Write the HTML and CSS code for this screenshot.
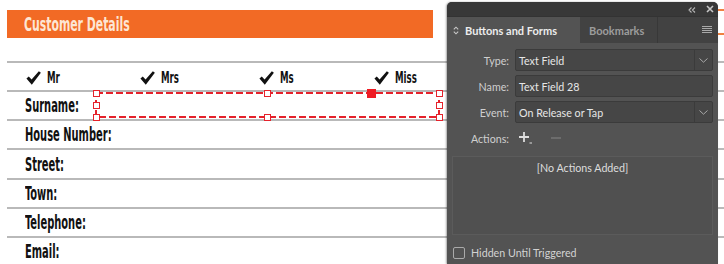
FILE: index.html
```html
<!DOCTYPE html>
<html lang="en">
<head>
<meta charset="utf-8">
<title>Customer Details form</title>
<link rel="stylesheet" href="styles.css">
</head>
<body>
<div class="sheet">
  <div class="banner"><span class="cond title">Customer Details</span></div>
  <div class="rows">
    <div class="row titles">
      <div class="choice"><svg class="check" viewBox="0 0 14 13" width="15" height="14"><path d="M0.4 7.0 L2.6 5.0 L5.2 8.0 L12.0 0.2 L13.9 1.5 L5.4 12.8 Z"/></svg><span class="cond small">Mr</span></div>
      <div class="choice"><svg class="check" viewBox="0 0 14 13" width="15" height="14"><path d="M0.4 7.0 L2.6 5.0 L5.2 8.0 L12.0 0.2 L13.9 1.5 L5.4 12.8 Z"/></svg><span class="cond small">Mrs</span></div>
      <div class="choice"><svg class="check" viewBox="0 0 14 13" width="15" height="14"><path d="M0.4 7.0 L2.6 5.0 L5.2 8.0 L12.0 0.2 L13.9 1.5 L5.4 12.8 Z"/></svg><span class="cond small">Ms</span></div>
      <div class="choice"><svg class="check" viewBox="0 0 14 13" width="15" height="14"><path d="M0.4 7.0 L2.6 5.0 L5.2 8.0 L12.0 0.2 L13.9 1.5 L5.4 12.8 Z"/></svg><span class="cond small">Miss</span></div>
    </div>
    <div class="row"><span class="cond label">Surname:</span></div>
    <div class="row"><span class="cond label">House Number:</span></div>
    <div class="row row-tall"><span class="cond label">Street:</span></div>
    <div class="row"><span class="cond label">Town:</span></div>
    <div class="row"><span class="cond label">Telephone:</span></div>
    <div class="row"><span class="cond label">Email:</span></div>
  </div>
</div>

<div class="selection">
  <svg class="sel-frame" width="345" height="26" viewBox="0 0 345 26"><rect x="1" y="1" width="343" height="24" fill="none" stroke="#e5222b" stroke-width="2" stroke-dasharray="7 3"/></svg>
  <span class="handle h-tl"></span>
  <span class="handle h-ml"></span>
  <span class="handle h-bl"></span>
  <span class="handle h-tm"></span>
  <span class="handle h-bm"></span>
  <span class="handle h-tr"></span>
  <span class="handle h-mr"></span>
  <span class="handle h-br"></span>
  <span class="handle-solid"></span>
</div>

<div class="guide guide-a"></div>
<div class="guide guide-b"></div>

<div class="panel">
  <div class="panel-top">
    <svg class="collapse" width="8" height="6" viewBox="0 0 8 6"><path d="M3.5 0.5 L1 3 L3.5 5.5 M7 0.5 L4.5 3 L7 5.5" fill="none" stroke="#b5b5b5" stroke-width="1.1"/></svg>
    <svg class="close" width="8" height="8" viewBox="0 0 8 8"><path d="M1 1 L7 7 M7 1 L1 7" stroke="#c8c8c8" stroke-width="1.6"/></svg>
  </div>
  <div class="tabs">
    <div class="tab tab-active">
      <svg class="updown" width="6" height="9" viewBox="0 0 6 9"><path d="M0.8 3.4 L3 1.2 L5.2 3.4 M0.8 5.6 L3 7.8 L5.2 5.6" fill="none" stroke="#c9c9c9" stroke-width="1.1"/></svg>
      Buttons and Forms
    </div>
    <div class="tab">Bookmarks</div>
    <div class="tab-rest">
      <svg class="menu" width="10" height="8" viewBox="0 0 10 8"><path d="M0 0.5 H10 M0 2.5 H10 M0 4.5 H10 M0 6.5 H10" stroke="#a9a9a9" stroke-width="1"/></svg>
    </div>
  </div>
  <div class="panel-body">
    <div class="field-row">
      <span class="field-label">Type:</span>
      <div class="field select"><span class="field-text">Text Field</span><span class="chev"><svg width="9" height="5" viewBox="0 0 9 5"><path d="M0.5 0.5 L4.5 4.2 L8.5 0.5" fill="none" stroke="#a8a8a8" stroke-width="1"/></svg></span></div>
    </div>
    <div class="field-row">
      <span class="field-label">Name:</span>
      <div class="field"><span class="field-text">Text Field 28</span></div>
    </div>
    <div class="field-row">
      <span class="field-label">Event:</span>
      <div class="field select"><span class="field-text">On Release or Tap</span><span class="chev"><svg width="9" height="5" viewBox="0 0 9 5"><path d="M0.5 0.5 L4.5 4.2 L8.5 0.5" fill="none" stroke="#a8a8a8" stroke-width="1"/></svg></span></div>
    </div>
    <div class="field-row actions-row">
      <span class="field-label">Actions:</span>
      <div class="action-btns">
        <svg class="plus" width="13" height="12" viewBox="0 0 13 12"><path d="M5 0 V10 M0 5 H10" stroke="#dedede" stroke-width="1.8"/><path d="M10.5 11 H13" stroke="#dedede" stroke-width="1.2"/></svg>
        <svg class="minus" width="10" height="10" viewBox="0 0 10 10"><path d="M0 5 H10" stroke="#6c6c6c" stroke-width="1.8"/></svg>
      </div>
    </div>
    <div class="action-list">[No Actions Added]</div>
    <label class="hidden-row"><span class="checkbox"></span>Hidden Until Triggered</label>
  </div>
</div>
</body>
</html>
```
FILE: styles.css
```css
* { box-sizing: border-box; }

html, body {
  margin: 0;
  padding: 0;
}

body {
  width: 724px;
  height: 264px;
  overflow: hidden;
  background: #ffffff;
  position: relative;
}

/* ---------- printed sheet ---------- */
.sheet {
  padding: 10px 0 0 7px;
}

.cond {
  display: inline-block;
  font-family: "DejaVu Sans Condensed", "DejaVu Sans", sans-serif;
  font-stretch: condensed;
  font-weight: bold;
  transform-origin: left center;
  white-space: nowrap;
}

.banner {
  width: 426px;
  height: 28px;
  background: #f26a25;
  padding-left: 17px;
  display: flex;
  align-items: center;
}

.title {
  font-size: 19.5px;
  color: #fde6d4;
  transform: scaleX(0.62);
  line-height: 1;
  margin-top: 1px;
}

.rows {
  margin-top: 23px;
}

.row {
  border-top: 2px solid #b9b9b9;
  height: 29px;
  display: flex;
  align-items: center;
  padding-left: 18px;
}

.row-tall {
  height: 30px;
}

.label {
  font-size: 19.5px;
  line-height: 1;
  color: #111111;
  transform: scaleX(0.565);
  margin-top: 1px;
}

.titles {
  display: grid;
  grid-template-columns: 114px 119px 115px auto;
  padding-left: 19px;
  padding-top: 3px;
}

.choice {
  display: flex;
  align-items: center;
  gap: 6px;
}

.check {
  fill: #111111;
  flex: none;
}

.small {
  font-size: 16px;
  line-height: 1;
  color: #111111;
  transform: scaleX(0.6);
}

/* ---------- selection overlay ---------- */
.selection {
  position: absolute;
  left: 95px;
  top: 92px;
  width: 345px;
  height: 26px;
}

.sel-frame {
  display: block;
}

.handle {
  position: absolute;
  width: 7px;
  height: 7px;
  background: #ffffff;
  border: 1px solid #e5222b;
}

.h-tl { left: -2px; top: -2px; }
.h-ml { left: -2px; top: 10px; }
.h-bl { left: -2px; top: 22px; }
.h-tm { left: 169px; top: -2px; }
.h-bm { left: 169px; top: 22px; }
.h-tr { left: 341px; top: -2px; }
.h-mr { left: 341px; top: 10px; }
.h-br { left: 341px; top: 22px; }

.handle-solid {
  position: absolute;
  left: 272px;
  top: -3px;
  width: 9px;
  height: 9px;
  background: #ee1c24;
}

.guide {
  position: absolute;
  left: 718px;
  width: 6px;
  height: 2px;
  background: #f08040;
}
.guide-a { top: 9px; }
.guide-b { top: 33px; }

/* ---------- panel ---------- */
.panel {
  position: absolute;
  left: 447px;
  top: 2px;
  width: 271px;
  bottom: 0;
  background: #535353;
  border-radius: 5px 5px 0 0;
  box-shadow: -1px 0 2px rgba(0, 0, 0, 0.35);
  font-family: Lato, "Open Sans", sans-serif;
  font-size: 10.7px;
  color: #d6d6d6;
  overflow: hidden;
}

.panel-top {
  height: 14px;
  background: #383838;
  display: flex;
  align-items: center;
  justify-content: flex-end;
  gap: 10px;
  padding-right: 4px;
}

.collapse { margin-top: 1px; }

.tabs {
  height: 27px;
  display: flex;
  background: #424242;
  border-top: 1px solid #333333;
}

.tab {
  width: 78px;
  display: flex;
  align-items: center;
  padding-left: 9px;
  font-weight: bold;
  font-size: 11px;
  color: #9c9c9c;
  border-right: 1px solid #383838;
}

.tab-active {
  width: 133px;
  background: #535353;
  color: #ececec;
  gap: 6px;
  padding-left: 6px;
  border-right: none;
}

.tab-rest {
  flex: 1;
  display: flex;
  align-items: center;
  justify-content: flex-end;
  padding-right: 6px;
}

.panel-body {
  padding: 6px 5px 0 0;
}

.field-row {
  display: grid;
  grid-template-columns: 62px 198px;
  column-gap: 6px;
  align-items: center;
  margin-bottom: 4px;
}

.field-label {
  text-align: right;
  color: #cfcfcf;
}

.field {
  height: 22px;
  background: #464646;
  border: 1px solid #3b3b3b;
  border-radius: 2px;
  display: flex;
  align-items: center;
  color: #e6e6e6;
}

.field-text {
  flex: 1;
  padding-left: 3px;
}

.chev {
  width: 18px;
  height: 100%;
  border-left: 1px solid #3b3b3b;
  display: flex;
  align-items: center;
  justify-content: center;
}

.actions-row {
  height: 22px;
  margin-top: 0;
}

.action-btns {
  display: flex;
  align-items: center;
  gap: 19px;
  padding-left: 4px;
}

.action-list {
  margin: 7px 0 0 5px;
  width: 261px;
  height: 79px;
  background: #505050;
  border: 1px solid #5b5b5b;
  text-align: center;
  padding-top: 4px;
  color: #dddddd;
}

.hidden-row {
  display: flex;
  align-items: center;
  gap: 6px;
  margin: 11px 0 0 6px;
  color: #d2d2d2;
}

.checkbox {
  width: 12px;
  height: 12px;
  border: 1px solid #aaaaaa;
  border-radius: 2px;
}
```
